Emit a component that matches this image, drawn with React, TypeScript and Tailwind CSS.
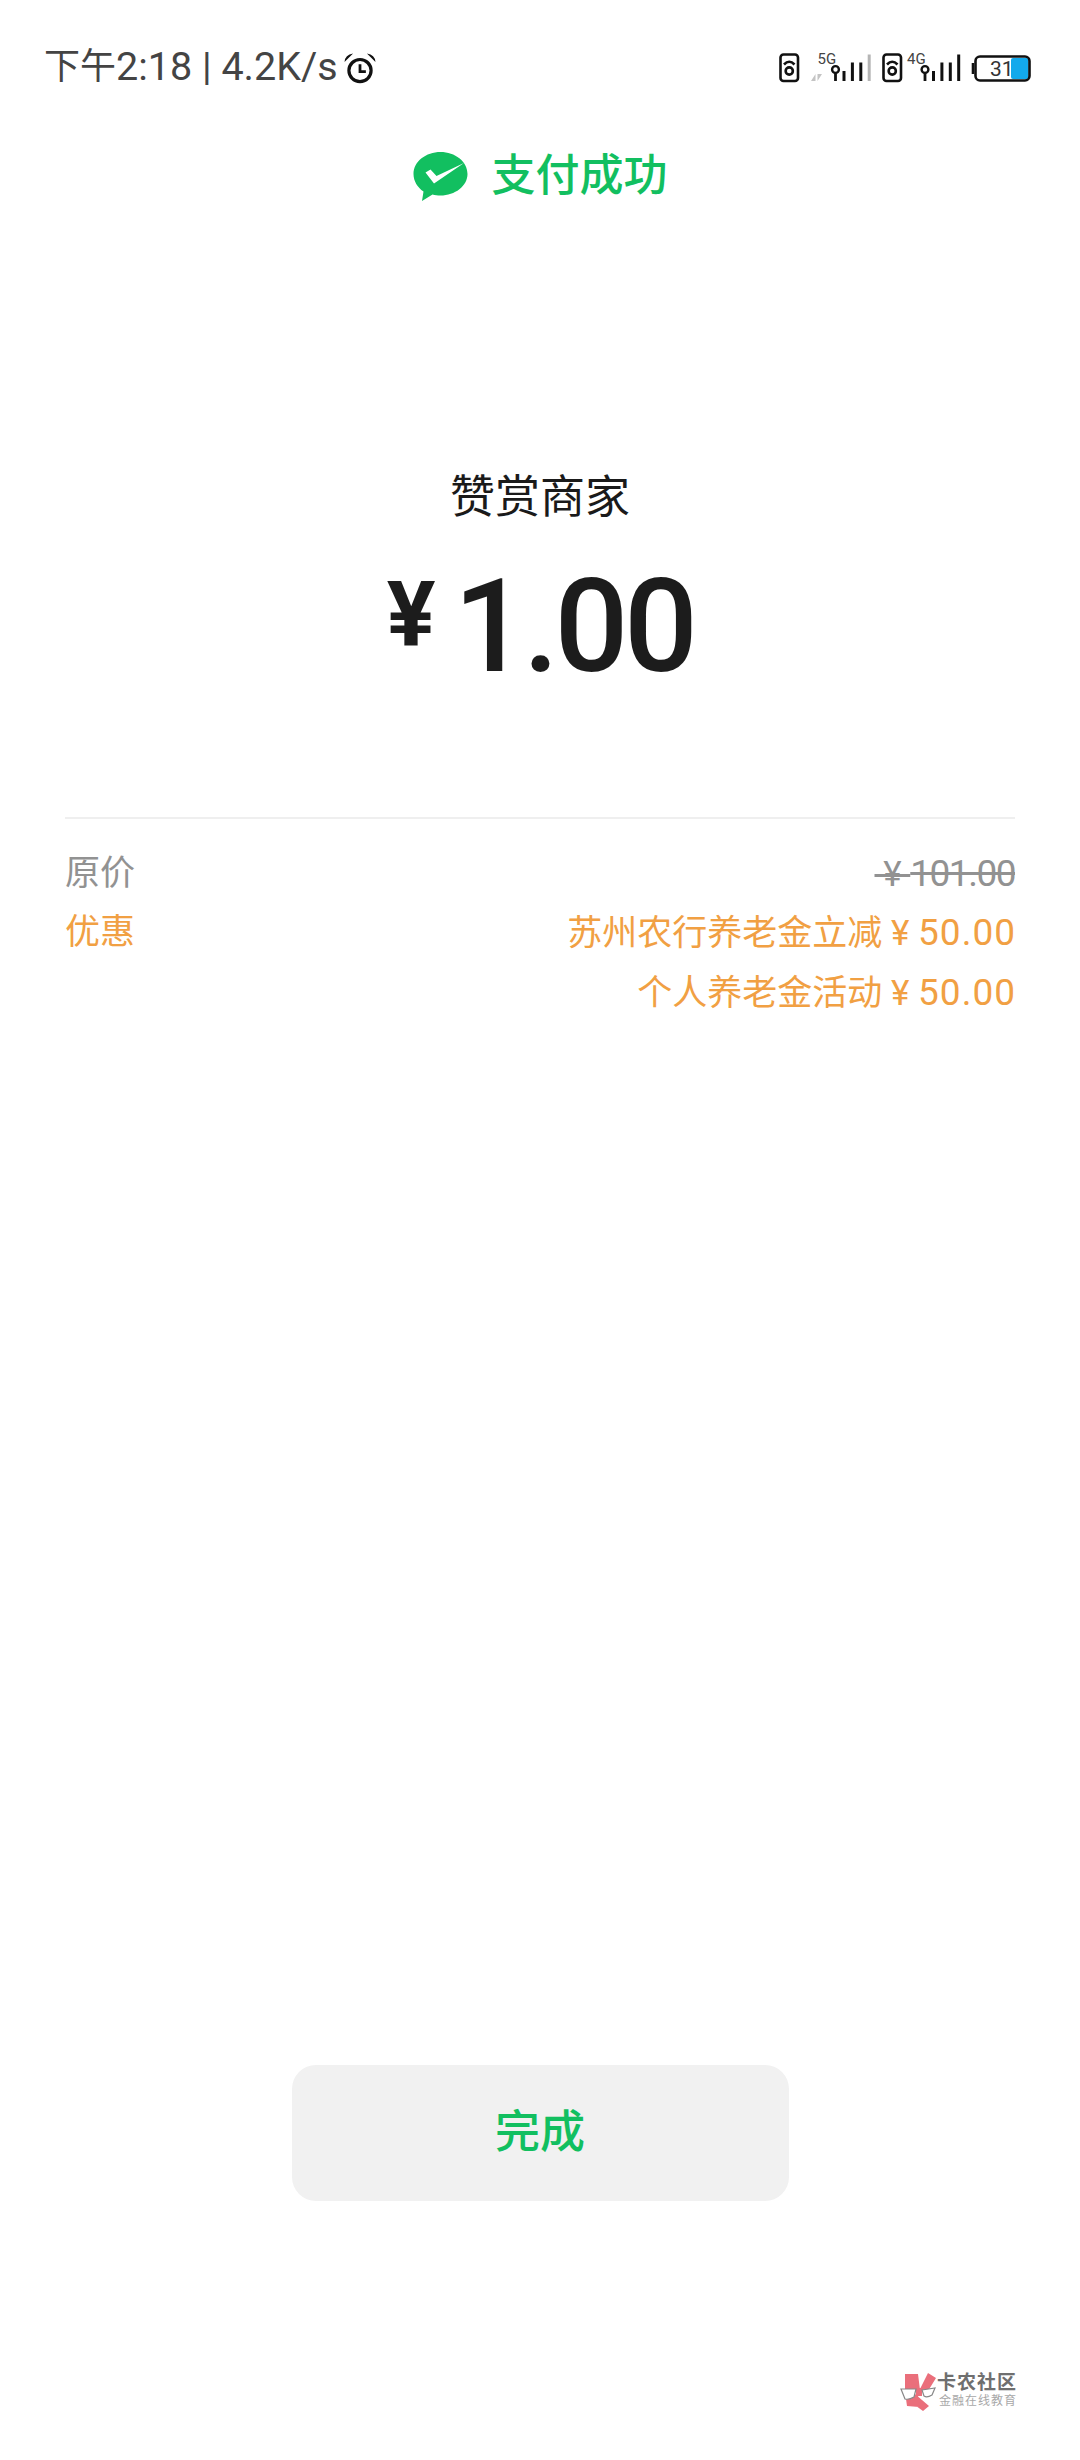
const cjk = "font-['Roboto','Noto_Sans_CJK_SC',sans-serif]";

/* Everything in the status icons strip is drawn in a 320x70 box. */
function SimIcon({ x }: { x: number }) {
  return (
    <g fill="none" stroke="#111" strokeWidth="2.6">
      <rect x={x} y="24.5" width="17.5" height="26.5" rx="3" />
      <circle cx={x + 8.75} cy="41" r="3.6" />
      <path d={`M${x + 3.5} 34.5 Q${x + 8.75} 29 ${x + 14} 34.5`} />
    </g>
  );
}

function Signal({ x, bars, lastGray }: { x: number; bars: number[]; lastGray?: boolean }) {
  return (
    <g>
      <circle cx={x} cy="39.5" r="3.4" fill="none" stroke="#111" strokeWidth="2.4" />
      <rect x={x - 1.4} y="42" width="2.8" height="9" fill="#111" />
      {bars.map((top, i) => (
        <rect
          key={i}
          x={x + 7 + i * 8.4}
          y={top}
          width="3"
          height={51 - top}
          fill={lastGray && i === bars.length - 1 ? "#b5b5b5" : "#111"}
        />
      ))}
    </g>
  );
}

function StatusIcons() {
  return (
    <svg width="320" height="70" viewBox="0 0 320 70">
      <SimIcon x={40.5} />
      <text x="77.5" y="33.5" fontSize="15" fill="#444" fontFamily="Roboto">5G</text>
      <path d="M71 51 L75.5 44 L75.5 51 Z M77.5 44 L77.5 51 L82 44 Z" fill="#c4c4c4" />
      <Signal x={95.5} bars={[41, 32.5, 32.5, 24.5]} lastGray />
      <SimIcon x={143.5} />
      <text x="167" y="33.5" fontSize="15" fill="#444" fontFamily="Roboto">4G</text>
      <Signal x={185} bars={[41, 32.5, 32.5, 24.5]} />
      <path d="M233 33 V44" stroke="#111" strokeWidth="2.6" fill="none" />
      <rect x="271" y="28" width="17.5" height="21" rx="2" fill="#13a9ec" />
      <rect x="235.5" y="26.5" width="54" height="24" rx="4.5" fill="none" stroke="#111" strokeWidth="2.6" />
      <text x="250" y="46" fontSize="21" fill="#333" fontFamily="Roboto">31</text>
    </svg>
  );
}

function AlarmIcon() {
  return (
    <svg width="32" height="32" viewBox="0 0 30 30" className="mt-[4px] ml-[6px]">
      <circle cx="15" cy="16.5" r="10.4" fill="none" stroke="#111" strokeWidth="3" />
      <path d="M15 10.5 V17.5 H20.5" fill="none" stroke="#111" strokeWidth="2.6" />
      <path d="M0.5 8.5 Q1 1.5 8.5 0.5 Z M29.5 8.5 Q29 1.5 21.5 0.5 Z" fill="#111" />
    </svg>
  );
}

function WechatPayIcon() {
  return (
    <svg width="56" height="54" viewBox="0 0 56 54">
      <path
        d="M27.5 3 C42 3 54.500 12.500 54.500 25 C54.500 37 42 46.500 27.500 46.500 C24.500 46.500 22 46.100 19.500 45.400 L9 52 L10.500 42.500 C4.500 38.500 0.500 32 0.500 25 C0.500 12.500 13 3 27.500 3 Z"
        fill="#12bf60"
      />
      <path d="M12.500 23.500 L17.500 20.500 L23.500 27 L51 14 L21 34.500 Z" fill="#fff" />
    </svg>
  );
}

function Watermark() {
  return (
    <div className="absolute left-[890px] top-[2365px] flex items-start">
      <svg width="47" height="50" viewBox="0 0 47 50">
        <path
          d="M15 9 H28 L30 25 H15 Z M29 26 L38 8 L46 13 L38 26 Z M26 23 H32 V31 H26 Z M16 34 L28 29 L29 42 L17 41 Z M25 29 L39 41 L33 46 L22 38 Z"
          fill="#ea6f7b"
        />
        <path
          d="M11 24 H26 L24 32 Q19 35 15 34 Z M32 25 L45 23 L42 30 Q37 33 34 31 Z"
          fill="#fff"
          stroke="#888"
          strokeWidth="1.2"
        />
      </svg>
      <div className="flex flex-col pt-[7px]">
        <span className="text-[19px] leading-[22px] font-bold tracking-[1px] text-[#6f6f6f]">卡农社区</span>
        <span className="ml-[2px] text-[12px] leading-[14px] tracking-[1px] text-[#a8a8a8]">金融在线教育</span>
      </div>
    </div>
  );
}

/* Spaces instead of margins here: line-through breaks across a margin. */
function Yuan({ value, tight }: { value: string; tight?: boolean }) {
  return (
    <>
      {"\u00a0¥\u00a0"}
      <span className={tight ? "text-[37px] tracking-[-1.5px]" : "mr-[-1px] text-[37px] tracking-[1px]"}>{value}</span>
    </>
  );
}

export default function App() {
  return (
    <div className={`relative h-[2460px] w-[1080px] overflow-hidden bg-white ${cjk}`}>
      <header className="flex h-[100px] items-start justify-between pt-[30px]">
        <div className="ml-[44px] flex h-[70px] items-center pt-[3px] text-[36px] leading-none text-[#444]">
          <span>下午</span>
          <span className="text-[39.500px]">2:18 | 4.2K/s</span>
          <AlarmIcon />
        </div>
        <div className="mr-[20px]">
          <StatusIcons />
        </div>
      </header>

      <div className="mt-[49px] flex h-[54px] items-center justify-center gap-[23px]">
        <WechatPayIcon />
        <span className="text-[44px] leading-none font-medium text-[#12bf60]">支付成功</span>
      </div>

      <div className="mt-[265px] text-center text-[45px] leading-[60px] text-[#1a1a1a]">赞赏商家</div>

      <div className="mt-[34px] flex h-[130px] items-center justify-center text-[#1c1c1c]">
        <span className="mb-[24px] text-[91px] leading-none font-bold">¥</span>
        <span className="ml-[18px] text-[130px] leading-none font-medium tracking-[-4.500px]">1.00</span>
      </div>

      <div className="mx-[65px] mt-[125px] border-t-2 border-[#efefef] pt-[30px] text-[35px]">
        <div className="flex h-[50px] items-center justify-between text-[#929292]">
          <span>原价</span>
          <span className="line-through">
            <Yuan value="101.00" tight />
          </span>
        </div>
        <div className="mt-[9px] flex items-start justify-between text-[#f1a043]">
          <span className="leading-[50px]">优惠</span>
          <div className="text-right whitespace-nowrap">
            <div className="leading-[50px]">苏州农行养老金立减<Yuan value="50.00" /></div>
            <div className="mt-[9px] leading-[50px]">个人养老金活动<Yuan value="50.00" /></div>
          </div>
        </div>
      </div>

      <div className="mt-[1046px] flex justify-center">
        <button className="h-[136px] w-[497px] rounded-[24px] bg-[#f1f1f1] text-[45px] font-medium text-[#12bf60]">
          完成
        </button>
      </div>

      <Watermark />
    </div>
  );
}
